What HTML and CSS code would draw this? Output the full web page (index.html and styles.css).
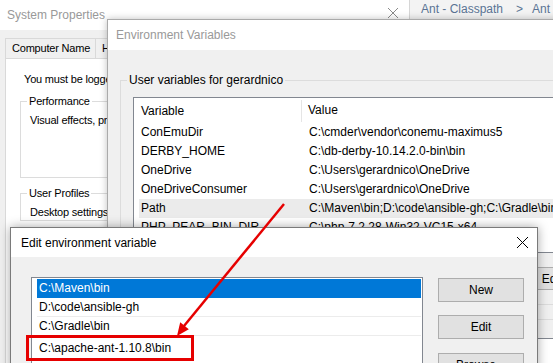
FILE: index.html
```html
<!DOCTYPE html>
<html lang="en">
<head>
  <meta charset="UTF-8">
  <title>Edit environment variable</title>
  <link rel="stylesheet" href="styles.css">
</head>
<body>
  <!-- back window -->
  <div id="sys" class="win">
    <div class="title">System Properties
      <span class="close"><svg width="10" height="10" viewBox="0 0 10 10"><path d="M0 0L10 10M10 0L0 10" stroke="#8a8a8a" stroke-width="1"/></svg></span>
    </div>
    <div class="tabs"><span class="tab first">Computer Name</span><span class="tab">Hardware</span></div>
    <div class="panel">
      <p>You must be logged on as an Administrator to make most of these changes.</p>
      <fieldset class="grp perf">
        <legend>Performance</legend>
        <p>Visual effects, processor scheduling, memory usage, and virtual memory</p>
      </fieldset>
      <fieldset class="grp">
        <legend>User Profiles</legend>
        <p>Desktop settings related to your sign-in</p>
      </fieldset>
    </div>
  </div>

  <div id="crumb">Ant - Classpath<span class="sep">&gt;</span>Ant</div>

  <div id="env" class="win">
    <div class="title">Environment Variables</div>
    <div class="body">
      <fieldset class="grp">
        <legend>User variables for gerardnico</legend>
        <div class="list vars">
          <div class="head"><span class="c1">Variable</span><span class="c2">Value</span></div>
          <div class="row"><span class="c1">ConEmuDir</span><span class="c2">C:\cmder\vendor\conemu-maximus5</span></div>
          <div class="row"><span class="c1">DERBY_HOME</span><span class="c2">C:\db-derby-10.14.2.0-bin\bin</span></div>
          <div class="row"><span class="c1">OneDrive</span><span class="c2">C:\Users\gerardnico\OneDrive</span></div>
          <div class="row"><span class="c1">OneDriveConsumer</span><span class="c2">C:\Users\gerardnico\OneDrive</span></div>
          <div class="row hot"><span class="c1">Path</span><span class="c2">C:\Maven\bin;D:\code\ansible-gh;C:\Gradle\bin;C:\apache-ant-1.10.8\bin</span></div>
          <div class="row"><span class="c1">PHP_PEAR_BIN_DIR</span><span class="c2">C:\php-7.2.28-Win32-VC15-x64</span></div>
        </div>
        <div class="btns">
          <button class="but">New...</button>
          <button class="but">Edit...</button>
          <button class="but">Delete</button>
        </div>
      </fieldset>
      <fieldset class="grp second">
        <legend>System variables</legend>
        <div class="list sysvars"></div>
      </fieldset>
    </div>
  </div>

  <div id="edit" class="win">
    <div class="title">Edit environment variable
      <span class="close"><svg width="11" height="11" viewBox="0 0 11 11"><path d="M0 0L11 11M11 0L0 11" stroke="#000" stroke-width="1"/></svg></span>
    </div>
    <div class="body">
      <div class="list paths">
        <div class="item sel">C:\Maven\bin</div>
        <div class="item">D:\code\ansible-gh</div>
        <div class="item">C:\Gradle\bin</div>
        <div class="item editing">C:\apache-ant-1.10.8\bin</div>
      </div>
      <div class="side">
        <button class="but">New</button>
        <button class="but">Edit</button>
        <button class="but">Browse...</button>
      </div>
    </div>
  </div>

  <!-- annotation -->
  <div id="mark"></div>
  <svg id="arrow" width="553" height="363" viewBox="0 0 553 363">
    <line x1="284" y1="204" x2="184" y2="326" stroke="#e60000" stroke-width="2.5"/>
    <polygon points="177,336 180.2,322.2 188.8,329.2" fill="#e60000"/>
  </svg>
</body>
</html>
```

FILE: styles.css
```css
* {
margin: 0;
padding: 0;
box-sizing: border-box;
}
body {
  width: 553px;
  height: 363px;
  overflow: hidden;
  position: relative;
  background-color: #f0f0f0;
  font: 12px "Liberation Sans", Arial, sans-serif;
  color: #000;
}

/* windows */
.win {
  position: absolute;
  background-color: #f0f0f0;
  overflow: hidden;
}
.title {
  display: flex;
  align-items: center;
  height: 30px;
  background-color: #fff;
  color: #999;
  white-space: nowrap;
}
.close {
  margin-left: auto;
  display: flex;
  align-items: center;
  justify-content: center;
}
.grp {
  border: 1px solid #dcdcdc;
}
.grp legend {
  padding: 0 2px;
  line-height: 15px;
}
.list {
  background-color: #fff;
  border: 1px solid #828790;
  white-space: nowrap;
  overflow: hidden;
}
.but {
  height: 24px;
  border: 1px solid #adadad;
  background-color: #e1e1e1;
  font: inherit;
  color: #000;
}

/* System Properties */
#sys {
  left: 0;
  top: 0;
  width: 409px;
  height: 363px;
  font-size: 11px;
  letter-spacing: -0.2px;
}
#sys .title {
  padding-left: 7px;
  font-size: 12px;
  letter-spacing: 0;
}
#sys .close {
  width: 32px;
  height: 26px;
  align-self: flex-start;
}
.tabs {
  display: flex;
  padding: 8px 0 0 5px;
}
.tab {
  height: 20px;
  line-height: 19px;
  border: 1px solid #d9d9d9;
  border-bottom: none;
  padding: 0 6px;
  white-space: nowrap;
}
.tab.first {
  width: 90px;
  text-align: center;
  border-right: none;
}
.panel {
  margin-left: 5px;
  height: 320px;
  background-color: #fff;
  border: 1px solid #d9d9d9;
  padding: 13px 0 0 14px;
  white-space: nowrap;
}
.panel > p {
  line-height: 15px;
  margin-left: 4px;
}
.panel .grp {
  width: 420px;
  margin-top: 8px;
  padding: 0 0 0 6px;
}
.panel .grp p {
  line-height: 15px;
  margin: 4px 0 0 3px;
}
.panel .perf {
  margin-top: 7px;
  padding-bottom: 49px;
}

/* breadcrumb of the window behind */
#crumb {
  position: absolute;
  left: 409px;
  top: 0;
  width: 144px;
  height: 19px;
  line-height: 19px;
  padding-left: 11px;
  background-color: #f3f3f3;
  border-left: 1px solid #d6d6d6;
  color: #5a7394;
  white-space: nowrap;
}
#crumb .sep {
  margin: 0 9px 0 13px;
}

/* Environment Variables */
#env {
  left: 107px;
  top: 19px;
  width: 480px;
  height: 380px;
  border: 1px solid #aaa;
  box-shadow: 0 0 7px rgba(0, 0, 0, 0.25);
}
#env .title {
  padding-left: 8px;
}
#env .body {
  padding: 23px 0 0 12px;
}
#env .grp {
  width: 520px;
  padding: 0 0 14px 12px;
}
#env .grp legend {
  margin-left: -6px;
}
.vars {
  margin-top: 9px;
  height: 156px;
}
.head {
  display: flex;
  height: 25px;
}
.head .c1 {
  width: 168px;
  height: 22px;
  line-height: 22px;
  margin-top: 2px;
  padding-left: 7px;
  border-right: 1px solid #e5e5e5;
}
.head .c2 {
  line-height: 24px;
  padding-left: 6px;
}
.row {
  display: flex;
  height: 19px;
  line-height: 19px;
  margin-left: 5px;
}
.row .c1 {
  width: 163px;
  padding-left: 2px;
}
.row .c2 {
  padding-left: 7px;
}
.row.hot {
  background-color: #ebebeb;
}
.btns {
  display: flex;
  gap: 8px;
  margin: 14px 0 0 302px;
}
.btns .but {
  width: 76px;
  height: 23px;
}
#env .second {
  margin-top: 7px;
}
.sysvars {
  margin-top: 11px;
  height: 80px;
}

/* Edit environment variable */
#edit {
  left: 10px;
  top: 227px;
  width: 528px;
  height: 160px;
  border: 1px solid #7a7a7a;
  box-shadow: 0 0 10px rgba(0, 0, 0, 0.35);
}
#edit .title {
  height: 29px;
  padding-left: 10px;
  color: #000;
}
#edit .close {
  width: 30px;
  margin-right: 0;
}
#edit .body {
  display: flex;
  align-items: flex-start;
  padding: 20px 0 0 20px;
}
.paths {
  width: 392px;
  height: 120px;
  padding: 1px 1px 0 5px;
}
.item {
  height: 19px;
  line-height: 18px;
  padding-left: 2px;
  border-bottom: 1px solid #ececec;
}
.item.sel {
  background-color: #0078d7;
  border-bottom-color: #0078d7;
  color: #fff;
}
.item.editing {
  height: 24px;
  line-height: 24px;
  border-bottom: none;
}
.side {
  display: flex;
  flex-direction: column;
  gap: 14px;
  margin: 1px 0 0 15px;
}
.side .but {
  width: 86px;
}
.side .but:first-child {
  margin-bottom: -1px;
}

/* annotation */
#mark {
  position: absolute;
  left: 26px;
  top: 335px;
  width: 168px;
  height: 26px;
  border: 3px solid #e60000;
}
#arrow {
  position: absolute;
  left: 0;
  top: 0;
}
```
